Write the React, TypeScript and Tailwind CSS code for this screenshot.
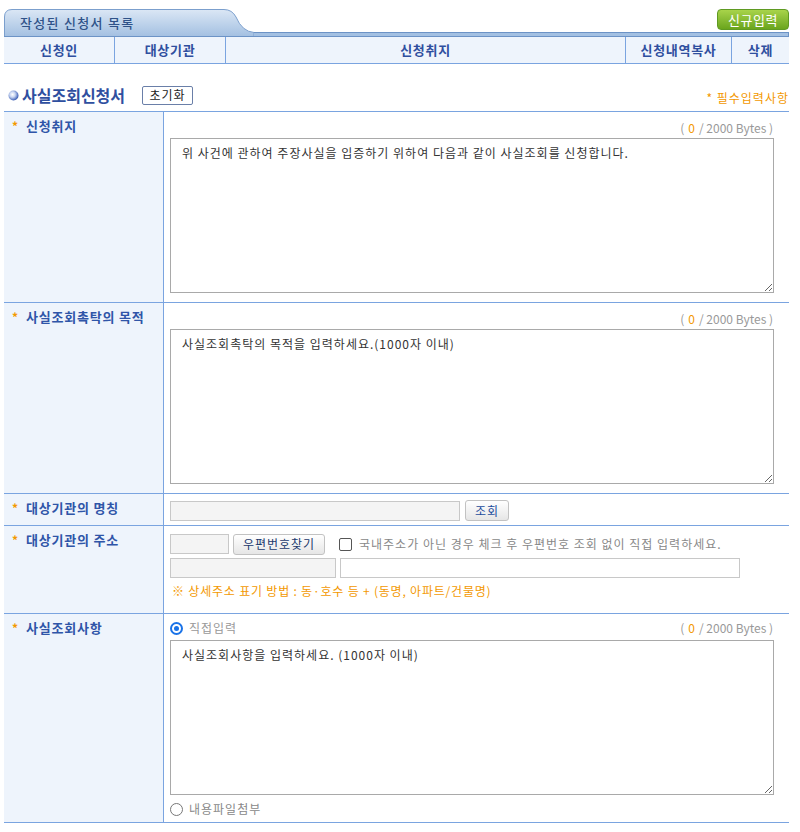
import React from 'react';

const font = { fontFamily: '"Noto Sans CJK KR", "Noto Sans", sans-serif' };

function Tab() {
  return (
    <svg width="250" height="28" viewBox="0 0 250 28" className="block">
      <defs>
        <linearGradient id="tabg" x1="0" y1="0" x2="0" y2="1">
          <stop offset="0" stopColor="#dbe7f5" />
          <stop offset="1" stopColor="#a2bfe1" />
        </linearGradient>
      </defs>
      <path
        d="M0.5,28 V8 Q0.5,0.5 8,0.5 H220 Q228,0.5 232,8 Q238,22.5 250,23.5 V28 Z"
        fill="url(#tabg)"
        stroke="#7b9fcd"
      />
      <rect x="0" y="27" width="250" height="1" fill="#6c93c6" />
    </svg>
  );
}

function Bullet() {
  return (
    <svg width="11" height="11" viewBox="0 0 11 11" className="block">
      <defs>
        <radialGradient id="bul" cx="0.4" cy="0.4" r="0.6">
          <stop offset="0" stopColor="#ffffff" />
          <stop offset="0.45" stopColor="#c9d6f2" />
          <stop offset="1" stopColor="#3d5fb5" />
        </radialGradient>
      </defs>
      <circle cx="5.5" cy="5.5" r="5" fill="url(#bul)" />
    </svg>
  );
}

function Counter() {
  return (
    <div className="flex h-[16px] justify-end pr-[16px] text-[12px] leading-[16px] text-[#999]">
      ( <span className="mx-[4px] text-[#f39800]">0</span>/ 2000 Bytes )
    </div>
  );
}

function Label({ text }: { text: string }) {
  return (
    <div className="w-[160px] shrink-0 border-r border-[#7aa4e0] bg-[#eef4fc] pl-[8px] pt-[6px]">
      <div className="flex h-[16px] items-center text-[13px] font-bold leading-[16px] tracking-[0.8px] text-[#2f55a8]">
        <span className="w-[14px] text-[12px] text-[#f39800]">*</span>
        {text}
      </div>
    </div>
  );
}

function Area({ value }: { value: string }) {
  return (
    <textarea
      defaultValue={value}
      className="block h-[155px] w-[604px] resize border border-[#a9a9a9] bg-white px-[11px] py-[5px] text-[12px] leading-[18px] tracking-[1px] text-[#333] outline-none"
      style={font}
    />
  );
}

const cols = [
  { t: '신청인', w: 'w-[111px]' },
  { t: '대상기관', w: 'w-[111px]' },
  { t: '신청취지', w: 'flex-1' },
  { t: '신청내역복사', w: 'w-[106px]' },
  { t: '삭제', w: 'w-[57px]' },
];

export default function App() {
  return (
    <div className="min-h-[832px] bg-white pl-[4px] pr-[11px]" style={font}>
      {/* 목록 헤더 */}
      <div className="flex items-end pt-[9px]">
        <div className="relative">
          <Tab />
          <span className="absolute left-[16px] top-[6px] text-[13px] font-medium leading-[16px] tracking-[1.3px] text-[#2f5288]">
            작성된 신청서 목록
          </span>
        </div>
        <div className="flex flex-1 flex-col items-end">
          <button className="mb-[2px] h-[21px] w-[72px] rounded-[4px] border border-[#5f9a22] bg-gradient-to-b from-[#a8d44a] to-[#6aa51c] text-[13px] leading-[18px] tracking-[0.5px] text-white">
            신규입력
          </button>
          <div className="h-[5px] w-full border-y border-r border-[#6c93c6] bg-[#a3c0e2]" />
        </div>
      </div>
      <div className="flex h-[27px] border-b border-[#7aa4e0] bg-[#eef4fc] text-[13px] font-bold tracking-[0.7px] text-[#2f4f9f]">
        {cols.map((c, i) => (
          <div
            key={c.t}
            className={`${c.w} flex items-center justify-center ${i < cols.length - 1 ? 'border-r border-[#7aa4e0]' : ''}`}
          >
            {c.t}
          </div>
        ))}
      </div>

      {/* 신청서 제목 */}
      <div className="mt-[21px] flex h-[20px] items-center">
        <div className="ml-[4px] mr-[3px]">
          <Bullet />
        </div>
        <span className="text-[16px] font-bold leading-[20px] text-[#2f4f9f]">사실조회신청서</span>
        <button className="ml-[17px] h-[19px] w-[51px] rounded-[2px] border border-[#6a7fa8] bg-white text-[12px] leading-[16px] tracking-[1px] text-[#222]">
          초기화
        </button>
        <span className="ml-auto mt-[6px] text-[12px] tracking-[1px] text-[#f39800]">* 필수입력사항</span>
      </div>

      {/* 입력 표 */}
      <div className="mt-[6px] border-t border-[#7aa4e0]">
        <div className="flex border-b border-[#7aa4e0]">
          <Label text="신청취지" />
          <div className="flex-1 pb-[9px] pl-[6px] pt-[8px]">
            <Counter />
            <div className="mt-[2px]">
              <Area value="위 사건에 관하여 주장사실을 입증하기 위하여 다음과 같이 사실조회를 신청합니다." />
            </div>
          </div>
        </div>

        <div className="flex border-b border-[#7aa4e0]">
          <Label text="사실조회촉탁의 목적" />
          <div className="flex-1 pb-[9px] pl-[6px] pt-[8px]">
            <Counter />
            <div className="mt-[2px]">
              <Area value="사실조회촉탁의 목적을 입력하세요.(1000자 이내)" />
            </div>
          </div>
        </div>

        <div className="flex border-b border-[#7aa4e0]">
          <Label text="대상기관의 명칭" />
          <div className="flex flex-1 items-center gap-[5px] pb-[4px] pl-[6px] pt-[6px]">
            <input className="h-[20px] w-[290px] border border-[#c8c8c8] bg-[#f4f4f4] outline-none" />
            <button className="h-[21px] w-[44px] rounded-[3px] border border-[#c2c2c2] bg-gradient-to-b from-white to-[#e6e6e6] text-[12px] leading-[16px] tracking-[1px] text-[#1c4c9c]">
              조회
            </button>
          </div>
        </div>

        <div className="flex border-b border-[#7aa4e0]">
          <Label text="대상기관의 주소" />
          <div className="flex-1 pb-[15px] pl-[6px] pt-[8px]">
            <div className="flex h-[20px] items-center">
              <input className="h-[20px] w-[59px] border border-[#c8c8c8] bg-[#f4f4f4] outline-none" />
              <button className="ml-[4px] h-[21px] w-[92px] rounded-[3px] border border-[#c2c2c2] bg-gradient-to-b from-white to-[#e6e6e6] text-[12px] leading-[16px] tracking-[1px] text-[#1c3a6e]">
                우편번호찾기
              </button>
              <span className="ml-[14px] h-[13px] w-[13px] rounded-[2px] border border-[#555] bg-white" />
              <span className="ml-[7px] text-[12px] tracking-[1px] text-[#888]">
                국내주소가 아닌 경우 체크 후 우편번호 조회 없이 직접 입력하세요.
              </span>
            </div>
            <div className="mt-[4px] flex h-[20px] items-center gap-[4px]">
              <input className="h-[20px] w-[166px] border border-[#c8c8c8] bg-[#f4f4f4] outline-none" />
              <input className="h-[20px] w-[400px] border border-[#c8c8c8] bg-white outline-none" />
            </div>
            <div className="mt-[5px] h-[15px] pl-[2px] text-[12px] leading-[15px] tracking-[0.8px] text-[#f39800]">
              ※ 상세주소 표기 방법 : 동·호수 등 + (동명, 아파트/건물명)
            </div>
          </div>
        </div>

        <div className="flex border-b border-[#7aa4e0]">
          <Label text="사실조회사항" />
          <div className="flex-1 pb-[5px] pl-[6px] pt-[6px]">
            <div className="flex h-[16px] items-center">
              <span className="flex h-[13px] w-[13px] items-center justify-center rounded-full border-2 border-[#1a73e8] bg-white">
                <span className="h-[5px] w-[5px] rounded-full bg-[#1a73e8]" />
              </span>
              <span className="ml-[6px] text-[12px] leading-[16px] tracking-[1px] text-[#999]">직접입력</span>
              <div className="flex-1">
                <Counter />
              </div>
            </div>
            <div className="mt-[4px]">
              <Area value="사실조회사항을 입력하세요. (1000자 이내)" />
            </div>
            <div className="mt-[6px] flex h-[16px] items-center">
              <span className="h-[13px] w-[13px] rounded-full border border-[#777] bg-white" />
              <span className="ml-[6px] text-[12px] leading-[16px] tracking-[1px] text-[#888]">내용파일첨부</span>
            </div>
          </div>
        </div>
      </div>
    </div>
  );
}
